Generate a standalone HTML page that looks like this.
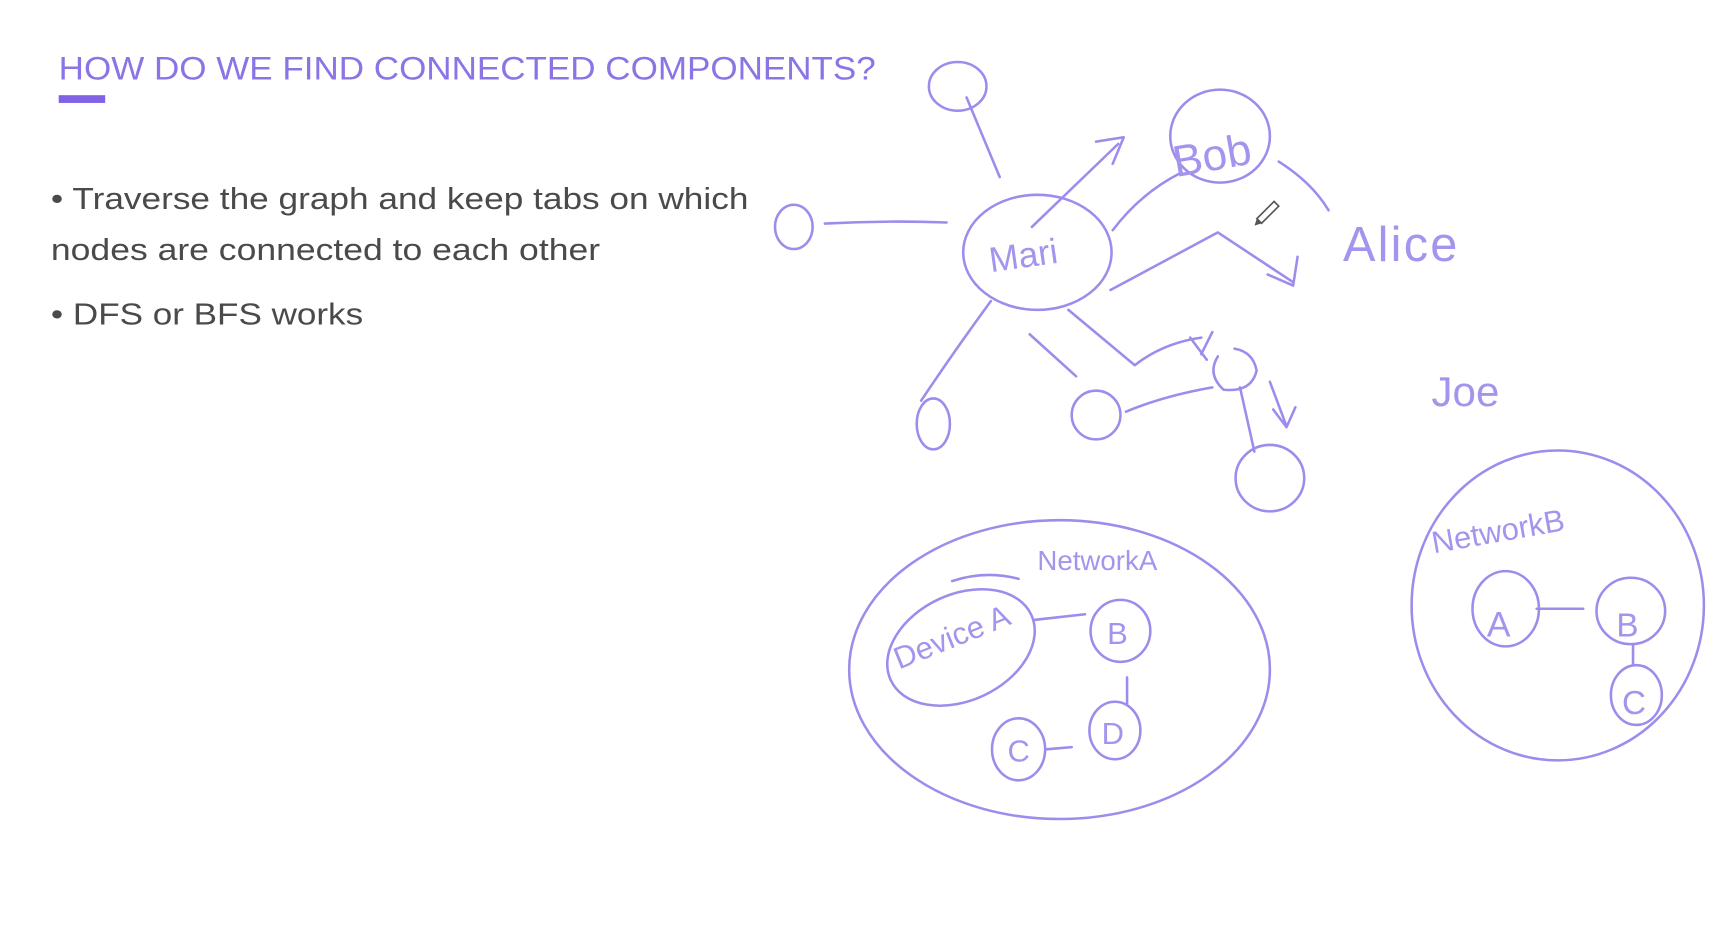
<!DOCTYPE html>
<html><head><meta charset="utf-8"><style>
html,body{margin:0;padding:0;background:#fff;width:1736px;height:943px;overflow:hidden}
svg{display:block}
</style></head><body>
<svg width="1736" height="943" viewBox="0 0 1568 852" preserveAspectRatio="none" xmlns="http://www.w3.org/2000/svg">
<rect width="1568" height="852" fill="#fff"/>
<text x="53" y="72" font-family="Liberation Sans, sans-serif" font-size="29" fill="#8c74e6" textLength="738" lengthAdjust="spacingAndGlyphs">HOW DO WE FIND CONNECTED COMPONENTS?</text>
<rect x="53" y="86" width="42" height="7" fill="#7f62e6"/>
<g font-family="Liberation Sans, sans-serif" font-size="28" fill="#4a4a4a">
<text x="46" y="189" textLength="630" lengthAdjust="spacingAndGlyphs">• Traverse the graph and keep tabs on which</text>
<text x="46" y="235" textLength="496" lengthAdjust="spacingAndGlyphs">nodes are connected to each other</text>
<text x="46" y="293" textLength="282" lengthAdjust="spacingAndGlyphs">• DFS or BFS works</text>
</g>
<g fill="none" stroke="#9e8bec" stroke-width="2.3" stroke-linecap="round" stroke-linejoin="round">
<ellipse cx="865" cy="78" rx="26" ry="22"/>
<path d="M873 88 L903 160"/>
<ellipse cx="717" cy="205" rx="17" ry="20"/>
<path d="M745 202 Q800 199 855 201"/>
<ellipse cx="937" cy="228" rx="67" ry="52"/>
<path d="M932 205 L1010 130 M990 128 L1015 124 L1005 148"/>
<ellipse cx="1102" cy="123" rx="45" ry="42"/>
<path d="M1005 208 Q1030 175 1065 157"/>
<path d="M1155 146 Q1185 165 1200 190"/>
<path d="M1003 262 L1100 210 L1168 255 M1145 248 L1168 258 L1172 232"/>
<path d="M895 272 Q860 320 832 362"/>
<ellipse cx="843" cy="383" rx="15" ry="23"/>
<path d="M930 302 L972 340"/>
<ellipse cx="990" cy="375" rx="22" ry="22"/>
<path d="M1017 372 Q1050 358 1095 350"/>
<path d="M965 280 L1025 330 Q1050 310 1085 305 M1075 305 L1090 325 M1095 300 L1085 320"/>
<path d="M1100 322 Q1090 338 1105 352 Q1130 355 1135 335 Q1132 318 1115 315"/>
<path d="M1120 350 L1133 408"/>
<ellipse cx="1147" cy="432" rx="31" ry="30"/>
<path d="M1147 345 L1162 385 M1150 370 L1162 386 L1170 368"/>
<ellipse cx="957" cy="605" rx="190" ry="135"/>
<ellipse cx="868" cy="585" rx="70" ry="48" transform="rotate(-25 868 585)"/>
<path d="M860 525 Q890 515 920 523"/>
<ellipse cx="1012" cy="570" rx="27" ry="28"/>
<path d="M935 560 L980 555"/>
<ellipse cx="1007" cy="660" rx="23" ry="26"/>
<path d="M1018 612 L1018 636"/>
<ellipse cx="920" cy="677" rx="24" ry="28"/>
<path d="M945 677 L968 675"/>
<ellipse cx="1407" cy="547" rx="132" ry="140"/>
<ellipse cx="1360" cy="550" rx="30" ry="34"/>
<path d="M1388 550 L1430 550"/>
<ellipse cx="1473" cy="552" rx="31" ry="30"/>
<path d="M1475 582 L1475 600"/>
<ellipse cx="1478" cy="628" rx="23" ry="27"/>
</g>
<g font-family="Liberation Sans, sans-serif" fill="#a594ee">
<text x="895" y="246" font-size="32" transform="rotate(-8 895 246)">Mari</text>
<text x="1062" y="160" font-size="40" transform="rotate(-10 1062 160)">Bob</text>
<text x="1213" y="236" font-size="44" letter-spacing="2">Alice</text>
<text x="1293" y="367" font-size="38">Joe</text>
<text x="937" y="515" font-size="25">NetworkA</text>
<text x="812" y="605" font-size="28" transform="rotate(-22 812 605)">Device A</text>
<text x="1000" y="582" font-size="28">B</text>
<text x="995" y="672" font-size="28">D</text>
<text x="910" y="688" font-size="28">C</text>
<text x="1295" y="500" font-size="28" transform="rotate(-10 1295 500)">NetworkB</text>
<text x="1343" y="575" font-size="32">A</text>
<text x="1460" y="575" font-size="30">B</text>
<text x="1465" y="645" font-size="30">C</text>
</g>
<g transform="translate(1143 194) rotate(45)">
<rect x="-3" y="-14" width="6" height="22" fill="#fff" stroke="#555" stroke-width="1.5"/>
<path d="M-3 8 L0 14 L3 8 Z" fill="#555"/>
</g>
</svg>
</body></html>
